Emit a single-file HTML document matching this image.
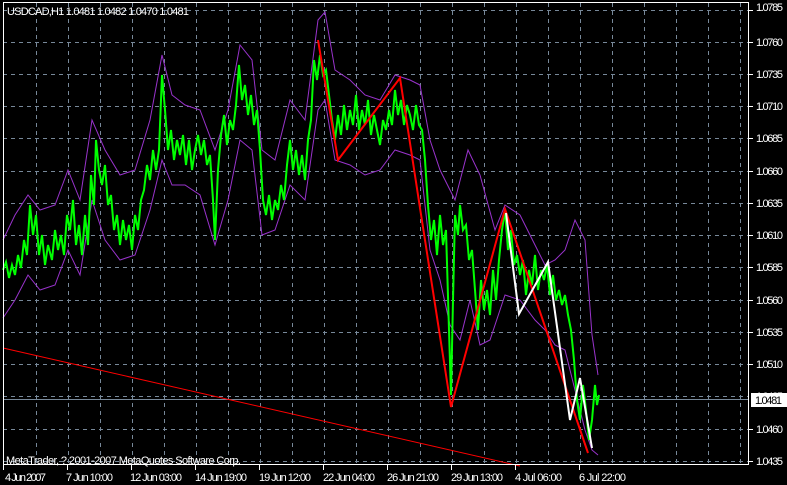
<!DOCTYPE html>
<html><head><meta charset="utf-8"><style>
html,body{margin:0;padding:0;background:#000;width:787px;height:485px;overflow:hidden}
svg{display:block}
text{font-family:"Liberation Sans",sans-serif;font-size:11px;fill:#fff}
</style></head><body>
<svg width="787" height="485" viewBox="0 0 787 485">
<rect width="787" height="485" fill="#000"/>
<g stroke="#778899" stroke-width="1" stroke-dasharray="4,4" fill="none">
<path d="M36.5 3V464M68.5 3V464M100.5 3V464M132.5 3V464M164.5 3V464M196.5 3V464M228.5 3V464M260.5 3V464M292.5 3V464M324.5 3V464M356.5 3V464M388.5 3V464M420.5 3V464M452.5 3V464M484.5 3V464M516.5 3V464M548.5 3V464M580.5 3V464M612.5 3V464M644.5 3V464M676.5 3V464M708.5 3V464M740.5 3V464"/>
<path d="M3 10.5H749M3 42.5H749M3 74.5H749M3 106.5H749M3 138.5H749M3 171.5H749M3 203.5H749M3 235.5H749M3 267.5H749M3 300.5H749M3 332.5H749M3 364.5H749M3 396.5H749M3 429.5H749M3 461.5H749"/>
</g>
<line x1="3" y1="399.5" x2="749" y2="399.5" stroke="#778899"/>
<g fill="none" stroke="#9933cc" stroke-width="1">
<path d="M3 240 L15 215 L28 195 L40 210 L55 205 L68 170 L80 200 L92 120 L105 150 L120 175 L135 170 L150 120 L162 55 L172 95 L185 105 L200 110 L215 150 L228 110 L240 45 L252 60 L262 150 L275 160 L290 100 L305 120 L318 20 L325 12 L335 70 L350 80 L365 95 L380 100 L395 75 L410 80 L420 85 L430 140 L440 170 L455 200 L468 150 L480 175 L495 230 L505 205 L520 215 L535 245 L545 265 L555 260 L565 250 L575 220 L585 240 L592 335 L598 375"/>
<path d="M3 318 L15 300 L28 275 L40 290 L55 285 L68 250 L80 275 L92 200 L105 240 L120 260 L135 255 L150 210 L162 160 L172 185 L185 185 L200 195 L215 245 L228 200 L240 140 L252 150 L262 235 L275 230 L290 185 L305 200 L318 110 L325 100 L335 160 L350 165 L365 175 L380 170 L395 150 L410 155 L420 160 L430 250 L440 280 L450 325 L460 340 L470 300 L480 345 L490 340 L505 295 L520 300 L535 320 L545 330 L555 345 L565 350 L575 390 L585 430 L592 450 L598 455"/>
</g>
<polyline fill="none" stroke="#00ff00" stroke-width="2" points="3,270 6,262 9,278 12,265 15,275 18,255 21,268 24,240 27,255 30,205 33,235 36,215 39,255 42,235 45,265 48,245 52,260 55,230 58,250 61,235 64,255 67,215 70,230 73,200 76,245 79,225 82,255 85,215 88,245 91,175 94,205 96,140 99,170 102,185 105,165 108,205 111,195 114,230 117,215 120,245 123,220 126,240 129,225 132,250 135,215 138,230 141,200 144,190 147,165 150,180 153,150 156,170 159,150 162,75 165,110 168,150 171,130 174,160 177,140 180,155 183,135 186,165 189,140 192,170 195,150 198,135 201,155 204,140 207,165 210,155 213,200 215,240 218,170 221,135 224,115 227,145 230,120 233,130 236,105 239,65 242,100 245,85 248,115 251,95 254,125 257,110 260,150 263,200 266,215 269,195 272,220 275,200 278,210 281,185 284,200 287,165 290,140 293,170 296,150 299,175 302,155 305,180 308,140 311,120 314,60 317,80 320,55 323,75 326,70 329,95 332,120 335,140 338,115 341,135 344,105 347,130 350,110 353,125 356,95 359,130 362,110 365,125 368,100 371,135 374,115 377,130 380,145 383,120 386,130 389,110 392,125 395,90 398,115 401,100 404,125 407,105 410,115 413,130 416,105 419,125 422,130 425,160 428,205 431,240 434,220 437,255 440,215 443,245 446,230 449,330 451,395 453,300 455,215 458,235 460,205 463,230 466,225 469,260 472,250 475,290 478,330 481,280 484,310 487,290 490,315 493,270 496,300 499,260 502,230 505,210 508,250 511,230 514,265 517,255 520,275 523,260 526,295 529,270 532,285 535,255 538,290 541,270 544,280 547,265 550,295 553,275 556,300 559,290 562,305 565,295 568,315 571,330 574,360 577,400 580,420 583,385 586,410 589,440 592,420 595,385 597,405 599,395"/>
<polyline fill="none" stroke="#ff0000" stroke-width="2" points="318,40 338,160 400,78 420,208 451,407 505,209 588,453"/>
<polyline fill="none" stroke="#ffffff" stroke-width="2" points="506,213 519,314 548,262 570,420 580,378 592,448"/>
<line x1="3" y1="348" x2="520" y2="466" stroke="#ff0000" stroke-width="1"/>
<rect x="3.5" y="2.5" width="745" height="462" fill="none" stroke="#fff"/>
<g>
<text x="756" y="11" textLength="27">1.0785</text>
<text x="756" y="46" textLength="27">1.0760</text>
<text x="756" y="78" textLength="27">1.0735</text>
<text x="756" y="110" textLength="27">1.0710</text>
<text x="756" y="142" textLength="27">1.0685</text>
<text x="756" y="175" textLength="27">1.0660</text>
<text x="756" y="207" textLength="27">1.0635</text>
<text x="756" y="239" textLength="27">1.0610</text>
<text x="756" y="271" textLength="27">1.0585</text>
<text x="756" y="304" textLength="27">1.0560</text>
<text x="756" y="336" textLength="27">1.0535</text>
<text x="756" y="368" textLength="27">1.0510</text>
<text x="756" y="400" textLength="27">1.0485</text>
<text x="756" y="433" textLength="27">1.0460</text>
<text x="756" y="465" textLength="27">1.0435</text>
</g>
<rect x="751" y="393" width="36" height="14" fill="#fff"/>
<text x="755" y="404" textLength="27" style="fill:#000">1.0481</text>
<g stroke="#fff"><path d="M749 10.5h4M749 42.5h4M749 74.5h4M749 106.5h4M749 138.5h4M749 171.5h4M749 203.5h4M749 235.5h4M749 267.5h4M749 300.5h4M749 332.5h4M749 364.5h4M749 429.5h4M749 461.5h4"/>
<path d="M3.5 465v5M67.5 465v5M131.5 465v5M195.5 465v5M259.5 465v5M323.5 465v5M387.5 465v5M451.5 465v5M515.5 465v5M579.5 465v5"/></g>
<g>
<text x="5" y="481" textLength="41">4 Jun 2007</text>
<text x="66" y="481" textLength="47">7 Jun 10:00</text>
<text x="130" y="481" textLength="52">12 Jun 03:00</text>
<text x="195" y="481" textLength="52">14 Jun 19:00</text>
<text x="259" y="481" textLength="52">19 Jun 12:00</text>
<text x="323" y="481" textLength="52">22 Jun 04:00</text>
<text x="387" y="481" textLength="52">26 Jun 21:00</text>
<text x="451" y="481" textLength="52">29 Jun 13:00</text>
<text x="515" y="481" textLength="47">4 Jul 06:00</text>
<text x="579" y="481" textLength="47">6 Jul 22:00</text>
</g>
<text x="7" y="15" textLength="182">USDCAD,H1  1.0481 1.0482 1.0470 1.0481</text>
<text x="6" y="464" textLength="235">MetaTrader, ? 2001-2007 MetaQuotes Software Corp.</text>
</svg>
</body></html>
